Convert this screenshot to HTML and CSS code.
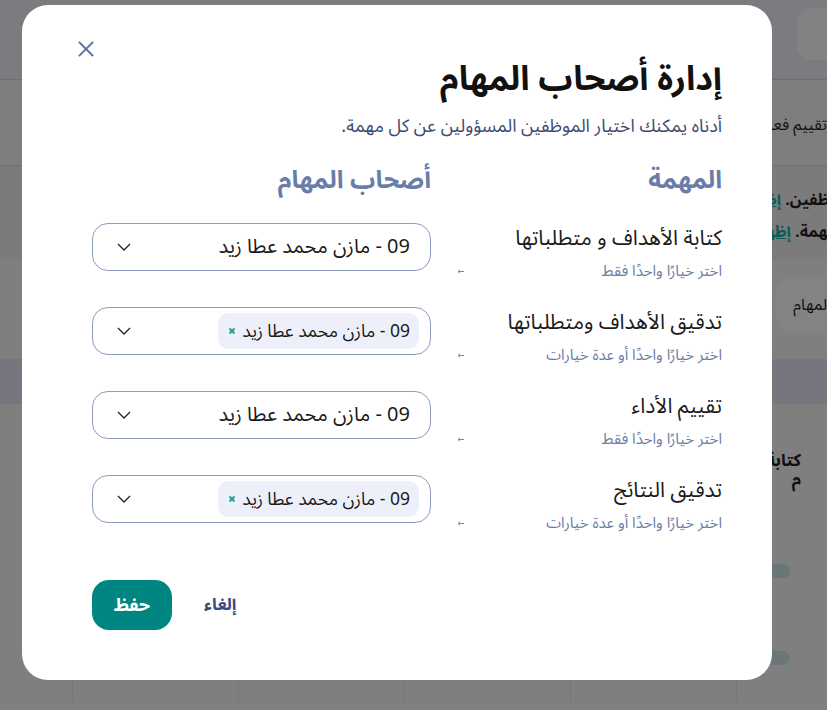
FILE: index.html
```html
<!DOCTYPE html>
<html lang="ar">
<head>
<meta charset="utf-8">
<title>إدارة أصحاب المهام</title>
<link rel="stylesheet" href="styles.css">
</head>
<body>
<div class="page" dir="rtl">
  <header class="topbar"><div class="search"></div></header>
  <div class="notice"><p>تقييم فعالية الأداء</p></div>
  <div class="info">
    <p class="info-line l1">الموظفين. <a>إظهار</a></p>
    <p class="info-line l2">مهمة. <a>إظهار</a></p>
  </div>
  <div class="tabs"><div class="tab">المهام</div></div>
  <div class="thead"></div>
  <div class="tbody">
    <div class="cell-title">كتابة<br>م</div>
    <div class="pill p1"></div>
    <div class="pill p2"></div>
  </div>
  <div class="gridlines">
    <span></span><span></span><span></span><span></span><span></span>
  </div>
</div>

<div class="modal" dir="rtl">
  <button class="close" aria-label="إغلاق">
    <svg width="16" height="16" viewBox="0 0 16 16"><path d="M1.5 1.5L14.5 14.5M14.5 1.5L1.5 14.5" stroke="#5d6f9d" stroke-width="1.8" fill="none" stroke-linecap="square"/></svg>
  </button>
  <h1 class="title">إدارة أصحاب المهام</h1>
  <p class="sub">أدناه يمكنك اختيار الموظفين المسؤولين عن كل مهمة.</p>

  <div class="grid">
    <div class="head">المهمة</div>
    <div class="head">أصحاب المهام</div>

    <div class="task">
      <div class="task-name">كتابة الأهداف و متطلباتها</div>
      <div class="hint"><span>اختر خيارًا واحدًا فقط</span><svg class="arr" width="7" height="5" viewBox="0 0 7 5"><path d="M7 2.5H1.5M3 0.8L1 2.5L3 4.2" stroke="#8a8a8a" stroke-width="1" fill="none"/></svg></div>
    </div>
    <div class="select">
      <span class="value">09 - مازن محمد عطا زيد</span>
      <svg class="chev" width="14" height="8" viewBox="0 0 14 8"><path d="M1 1L7 7L13 1" stroke="#222" stroke-width="1.3" fill="none"/></svg>
    </div>

    <div class="task">
      <div class="task-name">تدقيق الأهداف ومتطلباتها</div>
      <div class="hint"><span>اختر خيارًا واحدًا أو عدة خيارات</span><svg class="arr" width="7" height="5" viewBox="0 0 7 5"><path d="M7 2.5H1.5M3 0.8L1 2.5L3 4.2" stroke="#8a8a8a" stroke-width="1" fill="none"/></svg></div>
    </div>
    <div class="select">
      <span class="chip"><span>09 - مازن محمد عطا زيد</span><svg class="x" width="8" height="8" viewBox="0 0 8 8"><path d="M1.5 1.5L6.5 6.5M6.5 1.5L1.5 6.5" stroke="#12a197" stroke-width="1.8" fill="none"/></svg></span>
      <svg class="chev" width="14" height="8" viewBox="0 0 14 8"><path d="M1 1L7 7L13 1" stroke="#222" stroke-width="1.3" fill="none"/></svg>
    </div>

    <div class="task">
      <div class="task-name">تقييم الأداء</div>
      <div class="hint"><span>اختر خيارًا واحدًا فقط</span><svg class="arr" width="7" height="5" viewBox="0 0 7 5"><path d="M7 2.5H1.5M3 0.8L1 2.5L3 4.2" stroke="#8a8a8a" stroke-width="1" fill="none"/></svg></div>
    </div>
    <div class="select">
      <span class="value">09 - مازن محمد عطا زيد</span>
      <svg class="chev" width="14" height="8" viewBox="0 0 14 8"><path d="M1 1L7 7L13 1" stroke="#222" stroke-width="1.3" fill="none"/></svg>
    </div>

    <div class="task">
      <div class="task-name">تدقيق النتائج</div>
      <div class="hint"><span>اختر خيارًا واحدًا أو عدة خيارات</span><svg class="arr" width="7" height="5" viewBox="0 0 7 5"><path d="M7 2.5H1.5M3 0.8L1 2.5L3 4.2" stroke="#8a8a8a" stroke-width="1" fill="none"/></svg></div>
    </div>
    <div class="select">
      <span class="chip"><span>09 - مازن محمد عطا زيد</span><svg class="x" width="8" height="8" viewBox="0 0 8 8"><path d="M1.5 1.5L6.5 6.5M6.5 1.5L1.5 6.5" stroke="#12a197" stroke-width="1.8" fill="none"/></svg></span>
      <svg class="chev" width="14" height="8" viewBox="0 0 14 8"><path d="M1 1L7 7L13 1" stroke="#222" stroke-width="1.3" fill="none"/></svg>
    </div>
  </div>

  <div class="actions">
    <button class="cancel">إلغاء</button>
    <button class="save">حفظ</button>
  </div>
</div>
</body>
</html>
```

FILE: styles.css
```css
* { box-sizing: border-box; }
html, body { margin: 0; padding: 0; }
body {
  width: 827px;
  height: 710px;
  overflow: hidden;
  background: #7f7f7f;
  font-family: "Noto Sans Arabic", "Noto Kufi Arabic", "DejaVu Sans", "Noto Sans", sans-serif;
  position: relative;
}

/* background page (already dimmed) */
.page { width: 827px; height: 710px; overflow: hidden; }
.topbar {
  height: 80px;
  background: #7b7c7f;
  border-bottom: 1px solid #86702c;
  padding-top: 8px;
}
.search {
  width: 60px;
  height: 52px;
  margin-right: -30px;
  background: #828283;
  border-radius: 14px;
}
.notice {
  height: 86px;
  background: #7e7e7e;
  border-bottom: 1px solid #86702c;
  padding-top: 28px;
}
.notice p { margin: 0; font-size: 16px; color: #111; white-space: nowrap; }
.info { height: 93px; background: #7b7b7c; padding-top: 18px; }
.info-line { margin: 0; font-size: 16px; color: #111; white-space: nowrap; font-weight: bold; line-height: 32px; }
.info-line.l1 { margin-right: -30px; }
.info-line.l2 { margin-right: -10px; }
.info-line a { color: #0b5c55; text-decoration: underline; }
.tabs { background: #7f7f7f; padding: 18px 0 8px 0; }
.tab {
  width: 80px;
  height: 56px;
  margin-right: -28px;
  background: #838383;
  border-radius: 16px;
  font-size: 16px;
  color: #111;
  display: flex;
  align-items: center;
  padding-right: 24px;
}
.thead { height: 45px; background: #76777e; margin-top: 18px; }
.tbody { height: 268px; position: relative; padding-top: 48px; }
.cell-title { font-size: 17px; font-weight: bold; color: #111; line-height: 19px; margin-right: 26px; }
.pill { position: absolute; left: 755px; width: 35px; height: 14px; border-radius: 7px; background: #6a7677; }
.p1 { top: 160px; }
.p2 { top: 247px; }
.gridlines { display: flex; height: 30px; direction: ltr; padding-left: 72px; gap: 165px; }
.gridlines span { width: 1px; height: 30px; background: #75767c; }

/* modal */
.modal {
  position: absolute;
  left: 22px;
  top: 5px;
  width: 750px;
  height: 675px;
  background: #fff;
  border-radius: 26px;
  padding: 50px 50px 50px 70px;
  display: flex;
  flex-direction: column;
}
.close {
  position: absolute;
  left: 49px;
  top: 29px;
  width: 30px;
  height: 30px;
  border: 0;
  background: none;
  padding: 0;
  display: flex;
  align-items: center;
  justify-content: center;
  cursor: pointer;
}
.title {
  margin: 0;
  font-size: 34px;
  line-height: 48px;
  font-weight: 700;
  color: #111;
}
.sub {
  margin: 10px 0 0 0;
  font-size: 18px;
  line-height: 26px;
  color: #3c4a74;
}
.grid {
  display: grid;
  grid-template-columns: 262px 339px;
  column-gap: 29px;
  row-gap: 25px;
  margin-top: 24px;
}
.head {
  font-size: 25px;
  font-weight: 700;
  color: #6a7ca8;
  line-height: 34px;
  margin-bottom: 1px;
}
.task { display: flex; flex-direction: column; }
.task-name { font-size: 21px; line-height: 30px; color: #1b1b1b; }
.hint {
  display: flex;
  align-items: center;
  justify-content: space-between;
  font-size: 15px;
  line-height: 22px;
  color: #6a7ca8;
  margin-top: 7px;
}
.arr { margin-left: -3px; }
.select {
  height: 48px;
  border: 1px solid #909cbf;
  border-radius: 16px;
  display: flex;
  align-items: center;
  justify-content: space-between;
  padding: 0 11px 0 24px;
}
.value { font-size: 20px; color: #1b1b1b; margin-right: 9px; }
.chip {
  display: inline-flex;
  align-items: center;
  gap: 6px;
  height: 36px;
  background: #edf0fb;
  border-radius: 11px;
  padding: 0 9px 0 10px;
  font-size: 17.5px;
  color: #1b1b1b;
}
.chev { display: block; }
.actions {
  margin-top: auto;
  display: flex;
  justify-content: flex-end;
  align-items: center;
  gap: 32px;
}
.cancel {
  background: none;
  border: 0;
  padding: 0;
  font-family: inherit;
  font-size: 17px;
  font-weight: 700;
  color: #3b4a7e;
}
.save {
  width: 80px;
  height: 50px;
  border: 0;
  border-radius: 17px;
  background: #008682;
  color: #fff;
  font-family: inherit;
  font-size: 18px;
  font-weight: 700;
}
```
